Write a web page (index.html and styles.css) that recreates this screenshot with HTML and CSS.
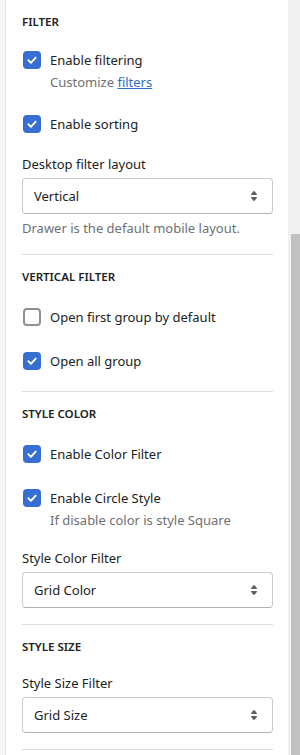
FILE: index.html
```html
<!DOCTYPE html>
<html lang="en">
<head>
  <meta charset="UTF-8" />
  <meta name="viewport" content="width=device-width, initial-scale=1" />
  <title>Filter settings</title>
  <link rel="stylesheet" href="styles.css">
</head>
<body>

<div class="page">
  <div class="gutter"></div>

  <div class="panel">
    <section class="group group-first">
      <h3 class="group-title">FILTER</h3>
      <div class="check-field">
        <label class="check">
          <span class="box is-on"><svg viewBox="0 0 18 18"><path d="M5.3 9.2l2.6 2.6 4.8-5.2"/></svg></span>
          Enable filtering
        </label>
        <p class="help indent">Customize <a href="#">filters</a></p>
      </div>
      <label class="check">
        <span class="box is-on"><svg viewBox="0 0 18 18"><path d="M5.3 9.2l2.6 2.6 4.8-5.2"/></svg></span>
        Enable sorting
      </label>
      <div class="select-field">
        <span class="field-label">Desktop filter layout</span>
        <div class="select">
          <span>Vertical</span>
          <svg viewBox="0 0 20 20"><path d="M7.676 9h4.648c.563 0 .879-.603.53-1.014l-2.323-2.746a.708.708 0 0 0-1.062 0l-2.324 2.746c-.347.411-.032 1.014.531 1.014zm4.648 2h-4.648c-.563 0-.878.603-.53 1.014l2.323 2.746c.27.32.792.32 1.062 0l2.323-2.746c.349-.411.033-1.014-.53-1.014z"/></svg>
        </div>
        <p class="help">Drawer is the default mobile layout.</p>
      </div>
    </section>

    <section class="group group-loose">
      <h3 class="group-title">VERTICAL FILTER</h3>
      <label class="check">
        <span class="box"></span>
        Open first group by default
      </label>
      <label class="check">
        <span class="box is-on"><svg viewBox="0 0 18 18"><path d="M5.3 9.2l2.6 2.6 4.8-5.2"/></svg></span>
        Open all group
      </label>
    </section>

    <section class="group">
      <h3 class="group-title">STYLE COLOR</h3>
      <label class="check">
        <span class="box is-on"><svg viewBox="0 0 18 18"><path d="M5.3 9.2l2.6 2.6 4.8-5.2"/></svg></span>
        Enable Color Filter
      </label>
      <div class="check-field">
        <label class="check">
          <span class="box is-on"><svg viewBox="0 0 18 18"><path d="M5.3 9.2l2.6 2.6 4.8-5.2"/></svg></span>
          Enable Circle Style
        </label>
        <p class="help indent">If disable color is style Square</p>
      </div>
      <div class="select-field">
        <span class="field-label">Style Color Filter</span>
        <div class="select">
          <span>Grid Color</span>
          <svg viewBox="0 0 20 20"><path d="M7.676 9h4.648c.563 0 .879-.603.53-1.014l-2.323-2.746a.708.708 0 0 0-1.062 0l-2.324 2.746c-.347.411-.032 1.014.531 1.014zm4.648 2h-4.648c-.563 0-.878.603-.53 1.014l2.323 2.746c.27.32.792.32 1.062 0l2.323-2.746c.349-.411.033-1.014-.53-1.014z"/></svg>
        </div>
      </div>
    </section>

    <section class="group">
      <h3 class="group-title">STYLE SIZE</h3>
      <div class="select-field">
        <span class="field-label">Style Size Filter</span>
        <div class="select">
          <span>Grid Size</span>
          <svg viewBox="0 0 20 20"><path d="M7.676 9h4.648c.563 0 .879-.603.53-1.014l-2.323-2.746a.708.708 0 0 0-1.062 0l-2.324 2.746c-.347.411-.032 1.014.531 1.014zm4.648 2h-4.648c-.563 0-.878.603-.53 1.014l2.323 2.746c.27.32.792.32 1.062 0l2.323-2.746c.349-.411.033-1.014-.53-1.014z"/></svg>
        </div>
      </div>
    </section>
  </div>

  <div class="scrollbar"><div class="thumb"></div></div>
</div>

</body>
</html>
```

FILE: styles.css
```css
* { margin: 0; padding: 0; box-sizing: border-box; }

body {
  font-family: "Noto Sans", "Open Sans", sans-serif;
  font-size: 13px;
  line-height: 20px;
  color: #202223;
  background: #f6f6f7;
}

.page {
  display: flex;
  height: 755px;
  overflow: hidden;
}

.gutter {
  width: 6px;
  background: #f6f6f7;
  border-right: 1px solid #e6e7e9;
}

.panel {
  width: 282px;
  background: #fff;
  padding: 0 15px 0 16px;
}

.scrollbar {
  width: 12px;
  background: #f1f1f1;
  padding-left: 3px;
}

.thumb {
  margin-top: 234px;
  height: 540px;
  background: #c1c1c1;
}

/* sections */
.group {
  display: flex;
  flex-direction: column;
  gap: 20px;
  padding: 14px 0 16px;
  border-bottom: 1px solid #dcdddf;
}

.group-loose { padding-bottom: 18px; }

.group-title {
  font-size: 11.5px;
  line-height: 16px;
  font-weight: 600;
}

.group-first .group-title { margin-bottom: -2px; }

/* checkboxes */
.check {
  display: flex;
  align-items: center;
  gap: 9px;
  min-height: 24px;
  cursor: pointer;
}

.box {
  flex: none;
  width: 18px;
  height: 18px;
  margin-left: 1px;
  border-radius: 4px;
  box-shadow: inset 0 0 0 2px #8c9196;
}

.box.is-on {
  background: #366fd1;
  box-shadow: none;
}

.box svg {
  display: block;
  width: 18px;
  height: 18px;
  fill: none;
  stroke: #fff;
  stroke-width: 1.9;
  stroke-linecap: round;
  stroke-linejoin: round;
}

.help {
  color: #6d7175;
}

.help.indent {
  padding-left: 28px;
}

.help a {
  color: #2c6ecb;
}

/* selects */
.select-field {
  display: flex;
  flex-direction: column;
  gap: 4px;
  margin-top: -2px;
}

.select {
  height: 36px;
  display: flex;
  align-items: center;
  justify-content: space-between;
  padding: 0 8px 0 11px;
  border: 1px solid #c9cccf;
  border-bottom-color: #aeb4b9;
  border-radius: 4px;
}

.select svg {
  width: 20px;
  height: 20px;
  fill: #5c5f62;
}
```
